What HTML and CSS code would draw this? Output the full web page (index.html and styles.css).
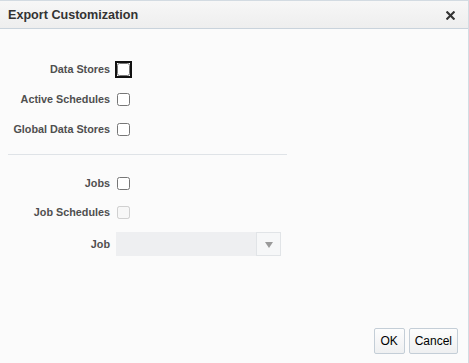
FILE: index.html
```html
<!DOCTYPE html>
<html>
<head>
<meta charset="utf-8">
<link rel="stylesheet" href="styles.css">
</head>
<body>
<div class="dialog">
  <div class="header">
    <span class="title">Export Customization</span>
    <span class="close">
      <svg width="9" height="9" viewBox="0 0 9 9"><path d="M1.3 1.3 L7.7 7.7 M7.7 1.3 L1.3 7.7" stroke="#333" stroke-width="2.1" stroke-linecap="square"/></svg>
    </span>
  </div>
  <div class="content">
    <div class="form group1">
      <label class="lbl">Data Stores</label>
      <span class="ctl"><input type="checkbox" class="cb focused"></span>
      <label class="lbl">Active Schedules</label>
      <span class="ctl"><input type="checkbox" class="cb"></span>
      <label class="lbl">Global Data Stores</label>
      <span class="ctl"><input type="checkbox" class="cb"></span>
    </div>
    <div class="sep"></div>
    <div class="form group2">
      <label class="lbl">Jobs</label>
      <span class="ctl"><input type="checkbox" class="cb"></span>
      <label class="lbl">Job Schedules</label>
      <span class="ctl"><input type="checkbox" class="cb" disabled></span>
      <label class="lbl job-lbl">Job</label>
      <span class="ctl sel-ctl">
        <span class="select">
          <span class="select-val"></span>
          <span class="select-btn"><span class="tri"></span></span>
        </span>
      </span>
    </div>
  </div>
  <div class="footer">
    <button class="btn ok">OK</button>
    <button class="btn">Cancel</button>
  </div>
</div>
</body>
</html>
```
FILE: styles.css
```css
html, body {
  margin: 0;
  padding: 0;
  width: 469px;
  height: 363px;
  overflow: hidden;
  font-family: "Liberation Sans", Arial, sans-serif;
}
.dialog {
  box-sizing: border-box;
  width: 469px;
  height: 363px;
  background: #fbfbfb;
  border-top: 1px solid #d3dbe2;
  border-right: 1px solid #d3dbe2;
  display: flex;
  flex-direction: column;
}
.header {
  box-sizing: border-box;
  height: 28px;
  flex: none;
  display: flex;
  align-items: center;
  justify-content: space-between;
  padding: 0 13px 0 8px;
  background: linear-gradient(#f7f7f7, #eeeeee);
  border-bottom: 1px solid #c9d3dc;
}
.title {
  font-size: 12.6px;
  font-weight: bold;
  color: #333;
}
.close {
  display: flex;
  width: 9px;
  height: 9px;
  margin-top: 2px;
}
.content {
  flex: 1;
  padding: 0 8px;
}
.form {
  display: grid;
  grid-template-columns: 102px auto;
  column-gap: 7px;
  align-items: center;
}
.group1 {
  padding-top: 32px;
  row-gap: 14px;
}
.group2 {
  padding-top: 20px;
  row-gap: 13px;
}
.lbl {
  font-size: 10.8px;
  font-weight: bold;
  color: #4f4f4f;
  text-align: right;
  white-space: nowrap;
  line-height: 16px;
}
.job-lbl {
  margin-top: -2px;
}
.ctl {
  display: flex;
  align-items: center;
  height: 16px;
}
.cb {
  width: 13px;
  height: 13px;
  margin: 0;
}
.cb.focused {
  outline: 2px solid #111;
  outline-offset: 0;
  border-radius: 2px;
}
.sep {
  width: 279px;
  height: 1px;
  background: #dfe3e7;
  margin-top: 17px;
}
.sel-ctl {
  height: 24px;
}
.select {
  box-sizing: border-box;
  display: flex;
  width: 165px;
  height: 24px;
  margin-left: -1px;
  margin-top: -2px;
  background: #eeeff1;
}
.select-val {
  flex: 1;
}
.select-btn {
  box-sizing: border-box;
  width: 25px;
  height: 24px;
  background: #f6f7f8;
  border: 1px solid #e1e4e7;
  display: flex;
  align-items: center;
  justify-content: center;
}
.tri {
  width: 0;
  height: 0;
  border-left: 4px solid transparent;
  border-right: 4px solid transparent;
  border-top: 6px solid #9a9a9a;
  margin-top: 1px;
}
.footer {
  flex: none;
  display: flex;
  justify-content: flex-end;
  gap: 4px;
  padding: 0 10px 9px 0;
}
.btn {
  box-sizing: border-box;
  height: 26px;
  padding: 0 5px;
  font-family: "Liberation Sans", Arial, sans-serif;
  font-size: 12px;
  color: #000;
  background: linear-gradient(#fdfdfd, #eff0f1);
  border: 1px solid #c4ced7;
  border-radius: 2px;
}
.btn.ok {
  width: 31px;
  padding: 0;
}
```
